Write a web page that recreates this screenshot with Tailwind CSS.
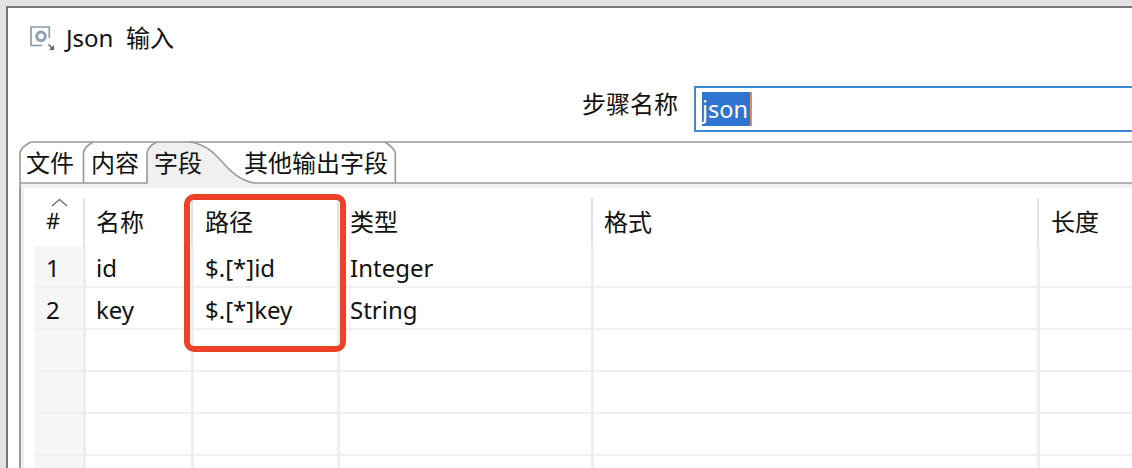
<!DOCTYPE html>
<html lang="zh-CN">
<head>
<meta charset="utf-8">
<title>Json 输入</title>
<script src="https://cdn.jsdelivr.net/npm/@tailwindcss/browser@4"></script>
</head>
<body class="w-[1132px] h-[468px] overflow-hidden bg-[#e4e4e4] pl-[6px] pt-[6px] font-['Noto_Sans','Noto_Sans_CJK_SC',sans-serif] text-[24px] leading-[32px] text-[#111] whitespace-nowrap">
<div class="relative w-[1126px] h-[462px] border-l-2 border-t-2 border-[#787878] bg-white flex flex-col">
  <!-- title bar -->
  <header class="h-[78px] shrink-0 flex pl-[22px] pt-[14px]">
    <svg class="w-[26px] h-[26px] mt-[4px] shrink-0" viewBox="0 0 26 26" fill="none">
      <path d="M12 19.5H1V1H19.3V12" stroke="#8299ab" stroke-width="1.6"/>
      <circle cx="11" cy="10.3" r="4.3" stroke="#8ca0b2" stroke-width="3"/>
      <path d="M18.5 18.5L22.5 22.5" stroke="#506b81" stroke-width="1.6"/>
      <path d="M24 19V24H19Z" fill="#506b81"/>
    </svg>
    <h1 class="ml-[10px] flex gap-[7px]"><span class="w-[53px] text-[24px]">Json</span><span>输入</span></h1>
  </header>
  <!-- step name -->
  <div class="h-[55px] shrink-0 flex pl-[574px]">
    <label class="w-[112px] pt-[2px]">步骤名称</label>
    <div class="h-[46px] flex-1 border-2 border-r-0 border-[#3f8ad4] pl-[6px] pt-[4px]">
      <div class="h-[34px] w-[50px] bg-[#2f74d0] border-r-2 border-[#e88b48] text-white leading-[35px] text-[23.5px]">json</div>
    </div>
  </div>
  <!-- tabs -->
  <div class="relative h-[47px] shrink-0 ml-[11px]">
    <svg class="absolute left-0 top-0 w-[1113px] h-[47px]" viewBox="19 141 1113 47" fill="none">
      <path d="M21 184H146L148 150Q149 145 156 142H190C220 146 222 174 254 184H1132V188H21Z" fill="#f0f0f0"/>
      <g stroke="#999" stroke-width="1.6">
        <path d="M20 188V153Q21 147 31 142H1132"/>
        <path d="M20 183H147V153Q148 146 157 142"/>
        <path d="M83.5 183V153Q84 147 93 142"/>
        <path d="M190 142C222 147 222 176 254 183H1132"/>
        <path d="M385 142Q395 149 395.300 153V183"/>
      </g>
    </svg>
    <nav class="relative flex pt-[6px] pl-[7px]"><span class="w-[65px]">文件</span><span class="w-[63px]">内容</span><span class="w-[90px]">字段</span><span>其他输出字段</span></nav>
  </div>
  <!-- field table -->
  <main class="ml-[11px] flex-1 border-l-2 border-[#999] flex">
    <div class="w-[3px] bg-[#f0f0f0]"></div>
    <div class="ml-[10px] flex-1 pt-[10px]">
      <div class="h-[48px] grid grid-cols-[49px_108px_146px_254px_446px_1fr] leading-[47px]">
        <div class="relative pl-[12px] text-[22px]"><svg class="absolute left-[17px] top-0 w-[17px] h-[9px]" viewBox="0 0 17 9" fill="none"><path d="M1 8L8.500 1.500L16 8" stroke="#777" stroke-width="1.6"/></svg><span class="relative -top-[1px]">#</span></div>
        <div class="border-l-2 border-[#e4e4e4] pl-[11px]">名称</div>
        <div class="border-l-2 border-[#e4e4e4] pl-[12px]">路径</div>
        <div class="border-l-2 border-[#e4e4e4] pl-[11px]">类型</div>
        <div class="border-l-2 border-[#e4e4e4] pl-[11px]">格式</div>
        <div class="border-l-2 border-[#e4e4e4] pl-[12px]">长度</div>
      </div>
      <div id="rows"></div>
    </div>
  </main>
  <!-- highlighted path column -->
  <div class="absolute left-[176px] top-[186px] w-[162px] h-[158px] rounded-[10px] border-[6px] border-[#ee4128]"></div>
</div>
<script>
const data = [['1','id','$.[*]id','Integer','',''],['2','key','$.[*]key','String','',''],['','','','','',''],['','','','','',''],['','','','','',''],['','','','','','']];
const pads = ['bg-[#f6f6f6] pl-[12px]','border-l-3 pl-[10px]','border-l-3 pl-[11px]','border-l-3 pl-[10px]','border-l-3','border-l-3'];
document.getElementById('rows').innerHTML = data.map(r =>
  '<div class="h-[42px] grid grid-cols-[49px_108px_146px_254px_446px_1fr] leading-[43px]">' +
  r.map((t,i) => '<div class="relative h-[42px] border-[#e9eff6] ' + pads[i] + '"><span>' + t + '</span><i class="absolute left-0 right-0 bottom-0 h-[2px] bg-[#f0f0f0]"></i></div>').join('') + '</div>').join('');
</script>
</body>
</html>
